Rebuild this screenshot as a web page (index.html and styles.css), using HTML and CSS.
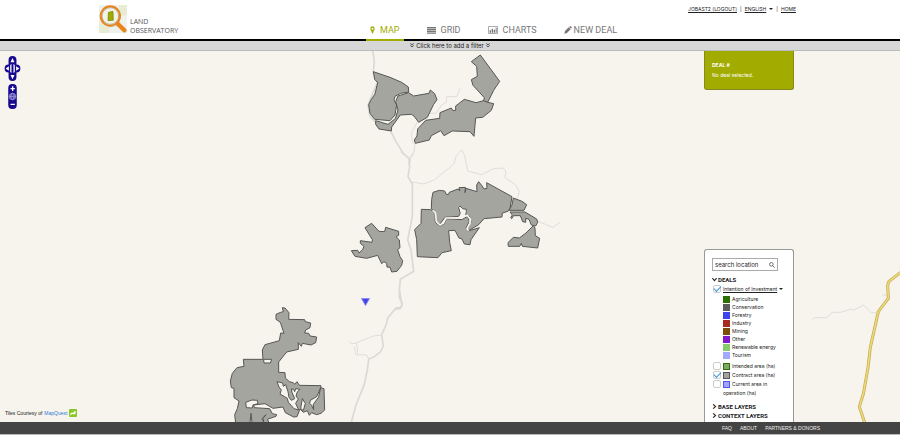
FILE: index.html
```html
<!DOCTYPE html>
<html lang="en">
<head>
<meta charset="utf-8">
<meta name="viewport" content="width=device-width, initial-scale=1">
<title>Land Observatory</title>
<link rel="stylesheet" href="styles.css">
</head>
<body>
<header class="header">
  <div class="header-inner">
    <a class="brand" href="#">
      <svg class="logo" viewBox="0 0 84 84" aria-hidden="true">
        <rect width="84" height="84" fill="#eef1ec"/>
        <path d="M0 50L30 60V84H0zM60 0H84V30L62 34z" fill="#e8ecd2"/>
        <path d="M30 66L60 62L84 78" stroke="#d9e4ee" stroke-width="4" fill="none"/>
        <path d="M56 56L76 76" stroke="#e8841a" stroke-width="13" stroke-linecap="round"/>
        <circle cx="34" cy="33" r="29" fill="#f4f4e6" stroke="#e8841a" stroke-width="6"/>
        <circle cx="34" cy="33" r="25" fill="none" stroke="#9b8d72" stroke-width="2"/>
        <path d="M28 22L42 19L43 46L27 47z" fill="#9dab00" stroke="#77840a" stroke-width="2"/>
      </svg>
      <span class="brand-name">LAND<br>OBSERVATORY</span>
    </a>
    <nav class="tabs">
      <a class="tab active" href="#"><svg class="pin" viewBox="0 0 15 24" aria-hidden="true"><path fill-rule="evenodd" d="M7.500 1C3.500 1 1 4 1 8c0 3 1 5 3 8l2 6c1 2 2 2 3 0l2-6c2-3 3-5 3-8 0-4-2.500-7-6.500-7zM7.500 5a3 3 0 1 1 0 6a3 3 0 1 1 0-6z"/></svg>MAP</a>
      <a class="tab" href="#"><svg class="bars" viewBox="0 0 27 21" aria-hidden="true"><path d="M0 0h27v4H0zM0 5.500h27v4H0zM0 11h27v4H0zM0 16.500h27v4H0z"/></svg>GRID</a>
      <a class="tab" href="#"><svg class="chart" viewBox="0 0 30 24" aria-hidden="true"><path d="M1.500 1.500h27v21h-27z" fill="none" stroke="#7a858c" stroke-width="2"/><path d="M5 13h4v7H5zM11 8h4v12h-4zM17 11h4v9h-4zM23 5h3v15h-3z"/></svg>CHARTS</a>
      <a class="tab pen" href="#"><svg class="pencil" viewBox="0 0 24 24" aria-hidden="true"><path d="M1 23L3 15L14 4L20 10L9 21zM15.500 3L18 1Q19 0 20 1L23 4Q24 5 23 6L21 8.500z"/></svg>NEW DEAL</a>
    </nav>
    <div class="account">
      <a href="#">JOBAST2 (LOGOUT)</a><span>|</span><button class="language" type="button"><u>ENGLISH</u><i class="caret"></i></button><span>|</span><a href="#">HOME</a>
    </div>
  </div>
</header>

<button class="filter" type="button">
  <svg viewBox="0 0 12 14" aria-hidden="true"><path d="M1 1l5 4 5-4M1 7l5 4 5-4"/></svg>
  Click here to add a filter
  <svg viewBox="0 0 12 14" aria-hidden="true"><path d="M1 1l5 4 5-4M1 7l5 4 5-4"/></svg>
</button>

<main class="map">
  <svg class="canvas" viewBox="0 51 900 371" preserveAspectRatio="xMidYMin slice" role="img" aria-label="Map of contract areas">
    <g class="roads">
      <g transform="translate(340 50) scale(.33333)">
        <path class="road" d="M98 0L103 35L100 65L112 98L94 140L84 165L90 200L105 215L150 240L168 275L190 310L210 328L207 345"/>
        <path class="track" d="M268 190L288 190L305 165L318 158L320 140L350 140L360 115M232 216L214 250L217 275L225 285L221 310L210 328"/>
      </g>
      <g transform="translate(340 130) scale(.33333)">
        <path class="road" d="M207 85L209 110L204 140L217 162L217 260L203 330L213 360L221 424L181 448L178 480L186 525L180 535L165 538"/>
      </g>
      <g transform="translate(400 150) scale(.33333)">
        <path class="track" d="M0 5L27 27L45 0M37 96L72 102L103 90L145 56L162 42L169 17L185 0L194 16L203 63L245 74L280 56L310 54L318 66L314 82L347 105L358 124L352 145M410 212L458 232L480 218"/>
      </g>
      <g transform="translate(220 290) scale(.33333)">
        <path class="road" d="M539 0L538 22L546 40L544 52L528 54L503 84L499 103L485 134L490 168L482 185L463 200L446 207L442 240L433 283L408 345L394 397"/>
        <path class="track" d="M485 135L460 138L410 158L394 162L388 154M410 158L413 190M402 170L408 194L440 195L446 207"/>
      </g>
      <g transform="translate(800 250) scale(.33333)">
        <path class="track" d="M38 208L46 203L80 203L97 187L122 187L155 177L160 181L190 165L213 187L233 190M247 135H264"/>
        <path class="highway-edge" d="M302 67L267 94L263 106L265 145L235 185L211 292L204 353L190 432L178 470L194 518"/>
        <path class="highway" d="M302 67L267 94L263 106L265 145L235 185L211 292L204 353L190 432L178 470L194 518"/>
      </g>
    </g>
    <g class="areas">
      <g transform="translate(340 50) scale(.33333)">
        <path d="M100 65L150 82L185 97L205 111L206 126L182 130L165 139L162 150L170 165L165 195L150 212L104 208L90 190L86 164L94 148L105 132L113 98L104 88z"/>
        <path d="M174 138L206 128L221 138L267 130L271 120L284 131L291 149L281 163L262 202L236 217L222 198L214 193L181 195L155 231L154 243L117 237L107 223V212L144 223L166 206L174 180L167 155z"/>
        <path d="M394 35L421 15L479 94L461 121L443 157L430 156L433 143L399 106L394 89L412 79L410 49z"/>
        <path d="M430 152L447 158L461 161L454 181L428 202L407 204L402 259L390 245L337 243L312 257L302 242L274 257L268 270L226 280L223 270L231 258L233 237L257 211L299 205L300 188L334 174L339 182L347 181L347 168L373 148L408 158L420 155z"/>
      </g>
      <g transform="translate(400 150) scale(.33333)">
        <path d="M94 177L95 148L99 127L118 121L134 123L138 132L145 134L148 127L174 117L180 123L177 113L196 112L195 128L198 115L231 125L230 105L236 95L245 106L252 117L261 115L260 98L336 140L330 176L324 184L307 189L306 201L252 206L236 224L204 243L202 235L213 216L208 198L197 195L199 178L188 176L180 168L176 173L181 190L176 199L135 202L120 222L109 214L104 183z"/>
        <path d="M64 178L92 179L105 189L106 217L120 228L133 221L139 206L186 209L202 199L208 214L198 234L205 243L238 233L213 269L210 284L193 282L186 267L177 264L165 241L146 242L149 277L154 302L126 308L114 323L52 320L50 269L44 239L63 220z"/>
        <path d="M340 144L366 154L380 164L372 181L327 181L336 165z"/>
        <path d="M330 186L375 186L410 207L413 217L407 228L394 225L387 208L377 205L377 217L368 215L361 197L341 197L335 206L332 204L337 195z"/>
        <path d="M400 227L405 234L406 257L419 265L413 294L367 289L364 280L359 289L325 289L324 278L340 262L358 264L378 249z"/>
        <path class="river" d="M98 181L106 188L109 214L120 225L130 219L138 204L180 204L188 200L202 196L211 208L210 220L201 236L206 242"/>
        <path class="river pond" d="M180 172L184 182H196L194 194L184 200L184 188z"/>
      </g>
      <path transform="translate(340 130) scale(.33333)" d="M75 293L95 280L117 304L134 305L137 292L176 304V316L168 320L178 330L180 353L173 359L180 380L188 392L185 406L171 424L155 426L150 412L141 411L140 400L132 395L125 401L113 376L80 385L45 379L34 362L53 361L57 369L68 359L72 349L61 340V332L96 337L97 329z"/>
      <g transform="translate(220 290) scale(.33333)">
        <path fill-rule="evenodd" d="M182 67L190 65L187 53L195 54L207 68L206 88L254 89L256 95L272 99L270 113L257 120L254 129L266 130L270 138L290 141L287 158L273 165L247 160L244 169L235 158L235 178L200 186L176 216V247L195 248L196 264L208 275L220 278L224 283L231 275L238 286L303 287L302 293L312 296L314 360L303 370L290 374L275 368L268 376L262 362L250 367L240 357L231 380L221 381L196 368L189 351L159 355L135 341L101 345L103 353L149 356L157 371L170 374L168 379L142 388L148 399H132L129 385L138 374L126 386L133 399H96L93 370L90 399H47L44 374L52 356L57 333L42 323V295L34 293L31 273L37 250L51 233L72 229L70 208L129 208L127 180L135 164L178 152L182 129L192 130L181 97L168 88L168 73zM131 208H155L151 219L132 219zM77 337L96 330L112 331L114 341L99 345L97 354L79 353zM171 275L188 279L190 289L197 284L204 305L207 322L214 331L224 326L216 307L214 297L221 298L224 305L227 296L240 298L232 306L228 318L235 327L227 340L236 360L222 356L205 337L202 325L180 312L184 300L177 291zM302 293L296 321L280 343L281 359L275 346L269 340L271 331L290 320zM247 326L256 340L250 362L242 355z"/>
      </g>
    </g>
    <path class="marker" d="M361.500 298.500H369.500L365.500 305.500z"/>
  </svg>

  <div class="controls">
    <svg class="pan" viewBox="0 0 50 76" role="img" aria-label="Pan the map">
      <path d="M25 0a12 12 0 0 1 12 12v14a12 12 0 0 1 0 24v14a12 12 0 0 1-24 0V50a12 12 0 0 1 0-24V12A12 12 0 0 1 25 0z" fill="#170a8e"/>
      <path d="M25 6L31 19H19zM25 71L31 58H19zM4 38L14 31V45zM46 38L36 31V45zM18 27L22 24V52L18 49zM28 24L32 27V49L28 52z" fill="#fff"/>
    </svg>
    <svg class="zoom" viewBox="0 0 26 76" role="img" aria-label="Zoom the map">
      <rect width="26" height="76" rx="12" fill="#170a8e"/>
      <path d="M7 14H20M13.500 7V21M7 62H20" stroke="#fff" stroke-width="4"/>
      <circle cx="13" cy="38" r="10" fill="#4f45b0" stroke="#aaa3dc" stroke-width="2"/><ellipse cx="13" cy="38" rx="5" ry="10" fill="none" stroke="#aaa3dc" stroke-width="2"/><path d="M3 38H23" stroke="#aaa3dc" stroke-width="2"/>
    </svg>
  </div>

  <p class="credit">Tiles Courtesy of <a href="#">MapQuest</a>
    <svg viewBox="0 0 24 24" aria-hidden="true"><rect width="24" height="24" rx="3" fill="#8bc727"/><path d="M3 18L6 11H13L16 7H20V13L16 15V18H14V15H8L6 19z" fill="#fff"/></svg>
  </p>

  <div class="overlay">
    <section class="deal">
      <h2>DEAL #</h2>
      <p>No deal selected.</p>
    </section>

    <section class="layers">
      <form class="search">
        <input type="text" placeholder="search location" aria-label="Search location">
        <button type="button" aria-label="Search"><svg viewBox="0 0 18 18" aria-hidden="true"><circle cx="7" cy="7" r="5.500"/><path d="M11 11L17 17"/></svg></button>
      </form>
      <h3><svg viewBox="0 0 14 14" aria-hidden="true"><path d="M1 3l6 7 6-7"/></svg>DEALS</h3>
      <div class="option intention"><input id="intention" type="checkbox" checked><label for="intention">Intention of Investment</label><i class="caret"></i></div>
      <ul class="legend">
        <li><i class="swatch agriculture"></i>Agriculture</li>
        <li><i class="swatch conservation"></i>Conservation</li>
        <li><i class="swatch forestry"></i>Forestry</li>
        <li><i class="swatch industry"></i>Industry</li>
        <li><i class="swatch mining"></i>Mining</li>
        <li><i class="swatch other"></i>Other</li>
        <li><i class="swatch renewable"></i>Renewable energy</li>
        <li><i class="swatch tourism"></i>Tourism</li>
      </ul>
      <div class="option"><input id="intended" type="checkbox"><label for="intended"><i class="swatch outlined intended"></i>Intended area (ha)</label></div>
      <div class="option"><input id="contract" type="checkbox" checked><label for="contract"><i class="swatch outlined contract"></i>Contract area (ha)</label></div>
      <div class="option"><input id="current" type="checkbox"><label for="current"><i class="swatch outlined current"></i>Current area in<br>operation (ha)</label></div>
      <h3 class="base"><svg viewBox="0 0 14 14" aria-hidden="true"><path d="M3 1l7 6-7 6"/></svg>BASE LAYERS</h3>
      <h3><svg viewBox="0 0 14 14" aria-hidden="true"><path d="M3 1l7 6-7 6"/></svg>CONTEXT LAYERS</h3>
    </section>
  </div>
</main>

<footer class="footer">
  <nav class="footer-links"><a href="#">FAQ</a><a href="#">ABOUT</a><a href="#">PARTNERS &amp; DONORS</a></nav>
</footer>
</body>
</html>
```
FILE: styles.css
```css
* { box-sizing: border-box; }

body {
  margin: 0;
  min-height: 100vh;
  display: flex;
  flex-direction: column;
  border-bottom: 1px solid #bbb;
  background: #fff;
  color: #222;
  font: 6px/8px Inter, "Liberation Sans", sans-serif;
}

h2, h3, p, ul { margin: 0; padding: 0; }
svg { display: block; flex: none; }
button { padding: 0; border: 0; background: none; color: inherit; font: inherit; cursor: pointer; }

.caret {
  display: inline-block;
  border: solid transparent;
  border-width: 2px 2px 0;
  border-top-color: #222;
}

/* Header */
.header { border-bottom: 2px solid #000; }
.header-inner {
  display: grid;
  grid-template-columns: 267px auto 1fr;
  max-width: 702px;
  margin: 0 auto;
  padding-right: 5px;
}
.brand { display: flex; align-items: flex-start; gap: 3px; height: 39px; padding: 5px 0 4px; color: #555; text-decoration: none; }
.logo { width: 28px; height: 28px; }
.brand-name { align-self: flex-end; font: 7px/9px "Open Sans", sans-serif; }
.tabs { display: flex; align-items: flex-end; gap: 19px; margin-bottom: -2px; }
.tab {
  display: flex;
  align-items: center;
  gap: 5px;
  padding: 0 4px 2px;
  border-bottom: 2px solid transparent;
  color: #777;
  font: 9px/14px Roboto, sans-serif;
  text-decoration: none;
}
.tab svg { fill: #777; }
.tab.active { border-color: #a2ab00; color: #a2ab00; }
.tab.active svg { fill: #a2ab00; }
.tab.pen { gap: 2px; }
.pin { width: 5px; height: 8px; }
.bars { width: 9px; height: 7px; }
.chart { width: 10px; height: 8px; }
.pencil { width: 8px; height: 8px; }
.account {
  display: flex;
  justify-content: flex-end;
  gap: 3px;
  padding-top: 5px;
  font-size: 5px;
}
.account a { color: inherit; }
.account .caret { margin: 0 0 1px 3px; }
.language { display: block; height: 8px; }

/* Filter bar */
.filter {
  display: flex;
  align-items: center;
  justify-content: center;
  gap: 2px;
  height: 10px;
  border-bottom: 1px solid #bbb;
  background: #d7d7d7;
}
.filter svg { width: 4px; height: 5px; fill: none; stroke: #333; stroke-width: 2.5; }

/* Map */
.map { position: relative; flex: 1; min-height: 371px; overflow: hidden; background: #f6f4ec; }
.canvas { position: absolute; inset: 0; width: 100%; height: 100%; }
.roads { fill: none; stroke-linejoin: round; }
.road { stroke: #d9d9d7; stroke-width: 5; }
.track { stroke: #deddda; stroke-width: 3; }
.highway-edge { stroke: #c6aa4b; stroke-width: 9; }
.highway { stroke: #ecd87c; stroke-width: 5; }
.areas { fill: #a5a5a0; stroke: #555; stroke-width: 3; stroke-linejoin: round; }
.river { fill: none; stroke: #f6f4ec; stroke-width: 5; }
.pond { fill: #f6f4ec; stroke-width: 2; }
.marker { fill: #4444e6; stroke: #8c8cf2; stroke-width: 1; }

.controls { position: absolute; top: 5px; left: 4px; display: grid; justify-items: center; gap: 3px; }
.pan { width: 17px; height: 25px; }
.zoom { width: 9px; height: 25px; }

.credit { position: absolute; left: 5px; bottom: 5px; display: flex; align-items: center; gap: 2px; font: 5px/8px "Liberation Sans", Arial, sans-serif; }
.credit a { color: #2f7bd8; text-decoration: none; }
.credit svg { width: 8px; height: 8px; }

.overlay {
  position: absolute;
  inset: 0;
  display: flex;
  flex-direction: column;
  justify-content: space-between;
  align-items: flex-end;
  width: 100%;
  max-width: 702px;
  margin: 0 auto;
  padding-right: 7px;
  pointer-events: none;
}
.overlay > section { width: 90px; pointer-events: auto; }

.deal {
  padding: 9px 7px;
  border: solid #858b1b;
  border-width: 0 1px 1px;
  border-radius: 0 0 3px 3px;
  background: #a2ab00;
  color: #fff;
  font-size: 5px;
  line-height: 10px;
}
.deal h2 { font-size: 5px; }

/* Layer panel */
.layers {
  padding: 8px 7px 2px;
  border: 1px solid #999;
  border-bottom: 0;
  border-radius: 3px 3px 0 0;
  background: #fff;
}
.search { display: flex; width: 66px; height: 13px; margin-bottom: 4px; border: 1px solid #aaa; }
.search input {
  flex: 1;
  min-width: 0;
  padding: 0 2px;
  border: 0;
  background: none;
  color: #222;
  font: 6px/10px Inter, "Liberation Sans", sans-serif;
}
.search input::placeholder { color: #222; opacity: 1; }
.search button { width: 10px; }
.search svg { width: 6px; height: 6px; margin: auto; fill: none; stroke: #333; stroke-width: 2; }

.layers h3 { display: flex; align-items: center; gap: 1px; font: bold 6px/9px Roboto, sans-serif; }
.layers h3 svg { width: 5px; height: 5px; fill: none; stroke: #222; stroke-width: 3; }
.layers h3.base { margin-top: 4px; }

.option { display: flex; align-items: flex-start; gap: 2px; padding-left: 1px; font-size: 5px; line-height: 9px; }
.option input {
  appearance: none;
  flex: none;
  width: 8px;
  height: 8px;
  margin: 0;
  border: 1px solid #ccc;
  border-radius: 2px;
  background: #fff;
}
.option input:checked::before {
  content: "";
  display: block;
  width: 6px;
  height: 3px;
  border: solid #3796dc;
  border-width: 0 0 1px 1px;
  transform: rotate(-45deg);
}
.intention { margin: 1px 0; }
.intention label { text-decoration: underline; }
.intention .caret { margin-top: 3px; }

.legend { margin-bottom: 3px; padding-left: 11px; list-style: none; font-size: 5px; }
.swatch { display: inline-block; width: 7px; height: 7px; margin-right: 2px; vertical-align: middle; }
.legend li { display: flex; align-items: center; }
.agriculture { background: #2b7000; }
.conservation { background: #5b5b60; }
.forestry { background: #3c44ee; }
.industry { background: #a62a20; }
.mining { background: #7c4c08; }
.other { background: #8018cc; }
.renewable { background: #86cb6c; }
.tourism { background: #a0a8ff; }
.outlined { border: 1px solid; }
.intended { border-color: #2b7000; background: #80a86a; }
.contract { border-color: #555; background: #a2a2a2; }
.current { border-color: #5058ee; background: #a0a4ff; }

/* Footer */
.footer { background: #444; }
.footer-links { display: flex; justify-content: flex-end; gap: 8px; max-width: 740px; margin: 0 auto; font: 5px/12px "Liberation Sans", Arial, sans-serif; }
.footer-links a { color: #eee; text-decoration: none; }
```
